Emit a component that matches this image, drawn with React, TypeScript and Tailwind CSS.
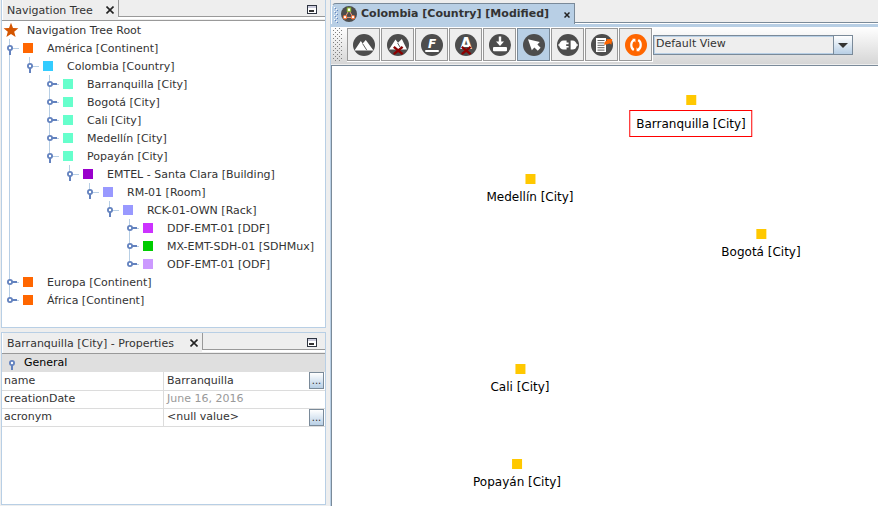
import React, { useState } from "react";

type Row = {
  label: string;
  color: string;
  depth: number;
  open: boolean;
  // vertical guide in each ancestor column, outermost first
  guides: boolean[];
  last?: boolean;
};

const rows: Row[] = [
  { label: "América [Continent]", color: "#ff6600", depth: 1, open: true, guides: [] },
  { label: "Colombia [Country]", color: "#33ccff", depth: 2, open: true, guides: [true], last: true },
  { label: "Barranquilla [City]", color: "#66ffcc", depth: 3, open: false, guides: [true, false] },
  { label: "Bogotá [City]", color: "#66ffcc", depth: 3, open: false, guides: [true, false] },
  { label: "Cali [City]", color: "#66ffcc", depth: 3, open: false, guides: [true, false] },
  { label: "Medellín [City]", color: "#66ffcc", depth: 3, open: false, guides: [true, false] },
  { label: "Popayán [City]", color: "#66ffcc", depth: 3, open: true, guides: [true, false], last: true },
  { label: "EMTEL - Santa Clara [Building]", color: "#9900cc", depth: 4, open: true, guides: [true, false, false], last: true },
  { label: "RM-01 [Room]", color: "#9999ff", depth: 5, open: true, guides: [true, false, false, false], last: true },
  { label: "RCK-01-OWN [Rack]", color: "#9999ff", depth: 6, open: true, guides: [true, false, false, false, false], last: true },
  { label: "DDF-EMT-01 [DDF]", color: "#cc33ff", depth: 7, open: false, guides: [true, false, false, false, false, false] },
  { label: "MX-EMT-SDH-01 [SDHMux]", color: "#00cc00", depth: 7, open: false, guides: [true, false, false, false, false, false] },
  { label: "ODF-EMT-01 [ODF]", color: "#cc99ff", depth: 7, open: false, guides: [true, false, false, false, false, false], last: true },
  { label: "Europa [Continent]", color: "#ff6600", depth: 1, open: false, guides: [] },
  { label: "África [Continent]", color: "#ff6600", depth: 1, open: false, guides: [], last: true },
];

function Guide({ on }: { on: boolean }) {
  return (
    <span className="flex h-[18px] w-5 shrink-0 pl-[7px]" aria-hidden="true">
      {on && <span className="h-full w-px bg-[#b8cfe5]" />}
    </span>
  );
}

function Handle({ open, last }: { open: boolean; last?: boolean }) {
  return (
    <svg width="20" height="18" viewBox="0 0 20 18" className="block">
      <rect x="7" y="0" width="1" height={last ? 9 : 18} fill="#b8cfe5" />
      <rect x="10" y="9" width="7" height="1" fill="#b8cfe5" />
      {open ? (
        <rect x="7" y="11" width="2" height="5" fill="#6382bf" />
      ) : (
        <rect x="10" y="8" width="5" height="2" fill="#6382bf" />
      )}
      <circle cx="8" cy="9" r="2.1" fill="#fff" stroke="#6382bf" strokeWidth="1.8" />
    </svg>
  );
}

function CloseIcon() {
  return (
    <svg width="8" height="8" viewBox="0 0 8 8" className="block">
      <path d="M0.5 0.5 7.5 7.5M7.5 0.5 0.5 7.5" stroke="#222" strokeWidth="1.6" />
    </svg>
  );
}

function PanelHeader({ title, tabWidth }: { title: string; tabWidth: string }) {
  return (
    <div className="flex h-[21px] shrink-0 border-b border-[#999] bg-[#eee]">
      <div className={"flex items-center justify-between border-l border-white pr-1 pl-1 " + tabWidth}>
        <h2 className="pt-[2px] whitespace-nowrap">{title}</h2>
        <button type="button" aria-label={"Close " + title}>
          <CloseIcon />
        </button>
      </div>
      <div className="flex flex-1 flex-col">
        <div className="flex h-[17px] items-end justify-end border-b border-l border-[#999] pr-2 pb-[2px]">
          <button type="button" aria-label={"Minimize " + title}>
            <svg width="10" height="9" viewBox="0 0 10 9" className="block">
              <rect x="0.5" y="0.5" width="9" height="8" fill="#fff" stroke="#2e3440" />
              <rect x="1" y="1" width="8" height="2" fill="#ccccdd" />
              <rect x="2" y="5" width="5" height="2" fill="#333" />
            </svg>
          </button>
        </div>
        <div className="h-[2px] bg-white" />
      </div>
    </div>
  );
}

function Disc({ color = "#4d4d4d", children }: { color?: string; children: React.ReactNode }) {
  return (
    <svg width="22" height="22" viewBox="0 0 22 22" className="block">
      <circle cx="11" cy="11" r="11" fill={color} />
      {children}
    </svg>
  );
}

const redCross = <path d="M6.8 12.8 15.6 20.2M15.6 12.8 6.8 20.2" stroke="#8b0000" strokeWidth="2.4" />;

const tools = [
  {
    name: "Set background image",
    icon: (
      <Disc>
        <path d="M1.5 16.5 7.8 7 9.6 9.6 12.8 6 20.5 16.5Z" fill="#fff" />
        <path d="M9.6 9.6 13.8 16.2" stroke="#4d4d4d" strokeWidth="0.9" />
      </Disc>
    ),
  },
  {
    name: "Remove background image",
    icon: (
      <Disc>
        <path d="M2 15.5 8.5 5.5 11 8.8 14.8 5 20 15.5Z" fill="#fff" />
        <path d="M10.6 9 13 13" stroke="#4d4d4d" strokeWidth="0.9" />
        {redCross}
      </Disc>
    ),
  },
  {
    name: "Add label",
    icon: (
      <Disc>
        <text x="11" y="14" textAnchor="middle" fill="#fff" fontSize="12" fontWeight="bold" fontStyle="italic" fontFamily="DejaVu Sans, sans-serif">
          F
        </text>
        <rect x="4" y="16" width="14" height="2" rx="1" fill="#fff" />
      </Disc>
    ),
  },
  {
    name: "Hide labels",
    icon: (
      <Disc>
        <text x="11" y="15" textAnchor="middle" fill="#fff" fontSize="15" fontWeight="bold" fontFamily="DejaVu Sans, sans-serif">
          A
        </text>
        {redCross}
      </Disc>
    ),
  },
  {
    name: "Save view",
    icon: (
      <Disc>
        <path d="M9.8 2.6H12.2V7.6H15L11 12 7 7.6H9.8Z" fill="#fff" />
        <rect x="4" y="13" width="14" height="4.2" rx="1" fill="#fff" />
      </Disc>
    ),
  },
  {
    name: "Select",
    selected: true,
    icon: (
      <Disc>
        <path d="M5 5.2 16.8 8 14.4 10.4 17.6 13.8 14.8 16.8 11.4 13.4 8.8 16.2Z" fill="#fff" />
      </Disc>
    ),
  },
  {
    name: "Connect",
    icon: (
      <Disc>
        <path d="M9.6 6.6V8.6H11.6V10.2H9.2V12H11.6V13.6H9.6V15.6H6.6A4.5 4.5 0 0 1 6.6 6.6Z" fill="#fff" />
        <path d="M13.6 6.6H15.4A4.5 4.5 0 0 1 15.4 15.6H13.6Z" fill="#fff" />
        <rect x="1.2" y="10.4" width="2" height="1.2" fill="#fff" />
        <rect x="19" y="10.4" width="2" height="1.2" fill="#fff" />
      </Disc>
    ),
  },
  {
    name: "Export report",
    icon: (
      <Disc>
        <rect x="5" y="4" width="10" height="14" fill="#fff" />
        <path d="M6.5 6.5H13.5M6.5 8.9H13.5M6.5 11.3H13.5M6.5 13.7H13.5M6.5 16.1H13.5" stroke="#4d4d4d" strokeWidth="0.9" />
        <path d="M13.4 11C13 8.4 14.2 7 16.2 6.6L15 5.2 21.2 5 20.4 10.8 18.8 9.4C17.4 10 15.4 10 13.4 11Z" fill="#ff6600" />
      </Disc>
    ),
  },
  {
    name: "Refresh",
    icon: (
      <Disc color="#ff6600">
        <path d="M9 6C5.4 8 5.4 14 8.8 16M13 16C16.6 14 16.6 8 13.2 6" stroke="#fff" strokeWidth="2.2" fill="none" />
        <path d="M7.2 4.8H10.4V8.4ZM14.8 17.2H11.6V13.6Z" fill="#fff" />
      </Disc>
    ),
  },
];

const nodes = [
  { label: "Barranquilla [City]", x: 359, y: 29, selected: true },
  { label: "Medellín [City]", x: 198, y: 108 },
  { label: "Bogotá [City]", x: 429, y: 163 },
  { label: "Cali [City]", x: 188, y: 298 },
  { label: "Popayán [City]", x: 185, y: 393 },
];

const props = [
  { name: "name", value: "Barranquilla", edit: true },
  { name: "creationDate", value: "June 16, 2016", edit: false },
  { name: "acronym", value: "<null value>", edit: true },
];

function TreePanel() {
  return (
    <section className="flex min-h-0 flex-[327_1_0%] flex-col border-x border-b border-[#b8cfe5] bg-white">
      <PanelHeader title="Navigation Tree" tabWidth="w-[116px]" />
      <ul className="min-h-0 flex-1 overflow-hidden">
        <li className="flex h-[18px] items-center gap-2 pl-px whitespace-nowrap">
          <svg width="16" height="16" viewBox="0 0 16 16" className="block">
            <path d="M8 0.8 10 5.9 15.4 6.2 11.2 9.7 12.6 15 8 12.1 3.4 15 4.8 9.7 0.6 6.2 6 5.9Z" fill="#d45500" />
          </svg>
          <span className="pt-[2px]">Navigation Tree Root</span>
        </li>
        {rows.map((r) => (
          <li key={r.label} className="flex h-[18px] items-center whitespace-nowrap">
            {r.guides.map((g, i) => (
              <Guide key={i} on={g} />
            ))}
            <button type="button" aria-label={r.label} aria-expanded={r.open}>
              <Handle open={r.open} last={r.last} />
            </button>
            <span className="mr-[14px] ml-px size-[10px]" style={{ backgroundColor: r.color }} />
            <span className="pt-[2px]">{r.label}</span>
          </li>
        ))}
      </ul>
    </section>
  );
}

function PropertiesPanel() {
  return (
    <section className="flex min-h-0 flex-[171_1_0%] flex-col border border-[#b8cfe5] bg-white">
      <PanelHeader title="Barranquilla [City] - Properties" tabWidth="w-[200px]" />
      <h3 className="flex h-[18px] shrink-0 items-center gap-2 bg-[#dfdfdf] pl-[6px] text-black">
        <button type="button" aria-label="Collapse General" className="pt-1">
          <svg width="8" height="12" viewBox="0 0 8 12" className="block">
            <rect x="3" y="6" width="2" height="5" fill="#6382bf" />
            <circle cx="4" cy="4" r="2.1" fill="#fff" stroke="#6382bf" strokeWidth="1.8" />
          </svg>
        </button>
        General
      </h3>
      <table className="w-full table-fixed border-collapse">
        <tbody>
          {props.map((p) => (
            <tr key={p.name} className="h-[18px] border-b border-[#dcdcdc]">
              <th scope="row" className="w-1/2 border-r border-[#dcdcdc] p-0 pl-[2px] text-left font-normal">
                {p.name}
              </th>
              <td className="p-0">
                <div className="flex h-[17px] items-center justify-between pr-px pl-[3px]">
                  <span className={p.edit ? "" : "text-[#999]"}>{p.value}</span>
                  {p.edit && (
                    <button
                      type="button"
                      aria-label={"Edit " + p.name}
                      className="h-[17px] w-[15px] border border-[#7a8a99] bg-linear-to-b from-white to-[#b8cfe5] text-center text-[10px] leading-[15px]"
                    >
                      ...
                    </button>
                  )}
                </div>
              </td>
            </tr>
          ))}
        </tbody>
      </table>
    </section>
  );
}

function EditorTab() {
  return (
    <div className="flex h-6 shrink-0 bg-[#eee] pt-[3px]">
      <div className="flex w-[244px] rounded-tl-[5px] border-t border-r border-l border-t-[#7a8a99] border-r-[#7a8a99] border-l-white bg-[#b8cfe5]">
        <svg width="6" height="18" viewBox="0 0 6 18" className="mt-px ml-px block" aria-hidden="true">
          {[2, 6, 10, 14].map((y) => (
            <g key={y}>
              <rect x="1" y={y} width="1" height="1" fill="#fff" />
              <rect x="2" y={y + 1} width="1" height="1" fill="#6382bf" />
              <rect x="3" y={y + 2} width="1" height="1" fill="#fff" />
              <rect x="4" y={y + 3} width="1" height="1" fill="#6382bf" />
            </g>
          ))}
        </svg>
        <div className="flex h-[19px] flex-1 items-center pr-1 pl-[2px]">
          <svg width="16" height="16" viewBox="0 0 16 16" className="block">
            <circle cx="8" cy="8" r="8" fill="#4d4d4d" />
            <path d="M8 4.2 4 11.4H12Z" fill="none" stroke="#f0a080" strokeWidth="1" />
            <rect x="6.3" y="2" width="3.4" height="3.4" fill="#fff" stroke="#8fbf2f" />
            <circle cx="4" cy="11.2" r="1.7" fill="#fff" stroke="#f0733a" strokeWidth="1.1" />
            <circle cx="12" cy="11.2" r="1.7" fill="#fff" stroke="#f0733a" strokeWidth="1.1" />
          </svg>
          <h2 className="ml-1 flex-1 font-bold whitespace-nowrap">Colombia [Country] [Modified]</h2>
          <button type="button" aria-label="Close Colombia" className="pt-[2px]">
            <svg width="6" height="6" viewBox="0 0 6 6" className="block">
              <path d="M0.5 0.5 5.5 5.5M5.5 0.5 0.5 5.5" stroke="#222" strokeWidth="1.5" />
            </svg>
          </button>
        </div>
      </div>
      <div className="flex flex-1 flex-col justify-end">
        <div className="h-[2px] border-t border-[#7a8a99] bg-white" />
      </div>
    </div>
  );
}

function Toolbar() {
  const [view, setView] = useState("Default View");
  return (
    <div className="flex h-[37px] shrink-0 items-start bg-linear-to-b from-white to-[#d6d6d6] pt-px">
      <svg width="16" height="34" className="block" aria-hidden="true">
        <defs>
          <pattern id="grip" width="4" height="4" patternUnits="userSpaceOnUse">
            <rect x="0" y="0" width="1" height="1" fill="#7f7f7f" />
            <rect x="2" y="2" width="1" height="1" fill="#7f7f7f" />
          </pattern>
        </defs>
        <rect x="2" y="0" width="10" height="34" fill="url(#grip)" />
      </svg>
      <div className="flex gap-px bg-white pr-px pb-px">
        {tools.map((t) => (
          <button
            key={t.name}
            type="button"
            aria-label={t.name}
            aria-pressed={!!t.selected}
            className={
              t.selected
                ? "flex size-[33px] items-center justify-center border border-[#7a8a99] bg-[#b8cfe5]"
                : "flex size-[33px] items-center justify-center border border-[#999] bg-[#eee]"
            }
          >
            {t.icon}
          </button>
        ))}
      </div>
      <div className="relative mt-[7px] h-5 w-[200px]">
        <select
          aria-label="View"
          value={view}
          onChange={(e) => setView(e.target.value)}
          className="block h-5 w-full appearance-none border border-[#7a8a99] bg-[#eee] pb-[2px] pl-[2px] leading-[16px] inset-ring inset-ring-[#b8cfe5] outline-none"
        >
          <option>Default View</option>
        </select>
        <span className="pointer-events-none absolute inset-y-0 right-0 flex w-5 items-center justify-center border border-[#7a8a99] bg-linear-to-b from-white to-[#b8cfe5]">
          <svg width="10" height="5" viewBox="0 0 10 5" className="block">
            <path d="M0 0H10L5 5Z" fill="#333" />
          </svg>
        </span>
      </div>
    </div>
  );
}

export default function App() {
  return (
    <main className="flex h-screen overflow-hidden bg-[#eee] font-['DejaVu_Sans',sans-serif] text-[11px] leading-[14px] text-[#333]">
      <div className="flex w-[330px] shrink-0 flex-col gap-1 pr-1 pb-px pl-px">
        <TreePanel />
        <PropertiesPanel />
      </div>
      <div className="flex min-w-0 flex-1 flex-col border-l border-[#b8cfe5]">
        <EditorTab />
        <div className="h-[3px] shrink-0 bg-[#b8cfe5]" />
        <Toolbar />
        <div className="h-px shrink-0 bg-[#eee]" />
        <div className="relative min-h-0 flex-1 overflow-hidden border-t border-l border-[#7a8a99] bg-white text-[12px] text-black">
          {nodes.map((n) => (
            <div key={n.label} className="absolute flex -translate-x-1/2 flex-col items-center gap-[5px]" style={{ left: n.x, top: n.y }}>
              <span className="size-[10px] bg-[#ffc800]" />
              <span
                className={
                  n.selected
                    ? "border border-[#ff0000] px-[6px] pt-[6px] pb-1 leading-[15px] whitespace-nowrap"
                    : "pt-px leading-[15px] whitespace-nowrap"
                }
              >
                {n.label}
              </span>
            </div>
          ))}
        </div>
      </div>
    </main>
  );
}
